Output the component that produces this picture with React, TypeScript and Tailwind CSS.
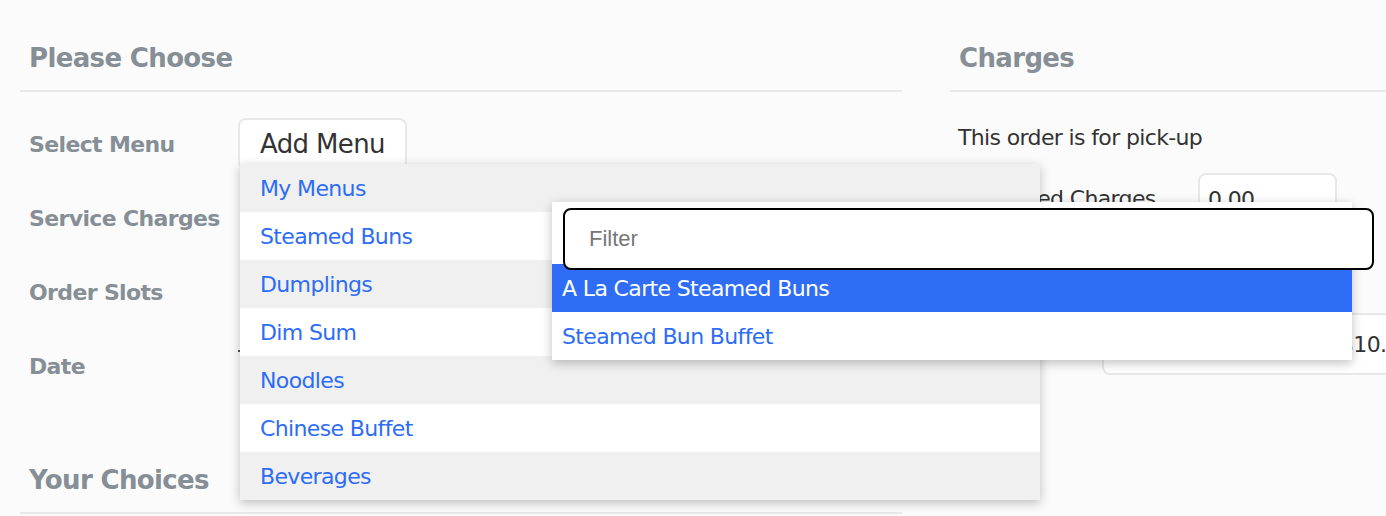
import React from 'react';

const menus = ['My Menus', 'Steamed Buns', 'Dumplings', 'Dim Sum', 'Noodles', 'Chinese Buffet', 'Beverages'];
const subItems = ['A La Carte Steamed Buns', 'Steamed Bun Buffet'];

const font = "font-['DejaVu_Sans',sans-serif] tracking-[-0.04em]";

const Heading = ({ children }: { children: React.ReactNode }) => (
  <h2 className="h-[92px] pl-[9px] pt-[40px] border-b-2 border-[#e8e8e8] text-[26px] leading-[36px] font-bold text-[#868e96]">
    {children}
  </h2>
);

const Row = ({ label, children }: { label: string; children?: React.ReactNode }) => (
  <div className="h-[74px] flex items-center">
    <div className="w-[218px] pl-[9px] text-[22px] font-bold text-[#868e96]">{label}</div>
    <div className="relative flex-1 h-full flex items-center">{children}</div>
  </div>
);

const App = () => {
  return (
    <div className={`w-[1386px] h-[516px] overflow-hidden bg-[#fbfbfb] ${font}`}>
      <div className="flex gap-[48px] pl-[20px]">
        {/* left column */}
        <div className="w-[882px] shrink-0">
          <Heading>Please Choose</Heading>
          <div className="pt-[15px]">
            <Row label="Select Menu">
              <div className="relative">
                <button className="h-[52px] px-[20px] bg-white border-2 border-[#e8e8e8] rounded-[8px] text-[26px] text-[#333]">
                  Add Menu
                </button>
                {/* menu dropdown */}
                <div className="absolute left-[2px] top-[46px] w-[800px] z-10 bg-white shadow-[0_3px_10px_rgba(0,0,0,0.25)]">
                  {menus.map((m, i) => (
                    <div
                      key={m}
                      className={`relative h-[48px] flex items-center pl-[20px] text-[22px] text-[#2d6cf6] ${i % 2 === 0 ? 'bg-[#f0f0f0]' : 'bg-white'}`}
                    >
                      {m}
                      {i === 1 && (
                        <div className="absolute left-[312px] top-[-10px] w-[800px] pt-[62px] bg-white z-20 shadow-[0_3px_10px_rgba(0,0,0,0.25)]">
                          <input
                            placeholder="Filter"
                            className="absolute left-[11px] top-[6px] w-[811px] h-[62px] z-30 bg-white border-2 border-black rounded-[8px] pl-[24px] text-[22px] text-[#333] placeholder:text-[#777] font-['Liberation_Sans',sans-serif] tracking-normal outline-none"
                          />
                          {subItems.map((s, j) => (
                            <div
                              key={s}
                              className={`h-[48px] flex items-center pl-[10px] text-[22px] ${j === 0 ? 'bg-[#2f6df6] text-white' : 'bg-white text-[#2d6cf6]'}`}
                            >
                              {s}
                            </div>
                          ))}
                        </div>
                      )}
                    </div>
                  ))}
                </div>
              </div>
            </Row>
            <Row label="Service Charges" />
            <Row label="Order Slots" />
            <Row label="Date">
              <div className="w-[2px] h-[2px] bg-[#555] mt-[-30px]" />
            </Row>
          </div>
          <div className="mt-[19px]">
            <Heading>Your Choices</Heading>
          </div>
        </div>

        {/* right column */}
        <div className="w-[500px] shrink-0">
          <Heading>Charges</Heading>
          <div className="pl-[8px] pt-[31px] text-[22px] text-[#333]">
            <p className="h-[30px] leading-[30px]">This order is for pick-up</p>
            <div className="mt-[20px] flex items-center">
              <span className="w-[240px]">Estimated Charges</span>
              <div className="w-[139px] h-[50px] bg-white border-2 border-[#e8e8e8] rounded-[8px] pl-[8px] pt-[10px] leading-[30px]">
                0.00
              </div>
            </div>
            <div className="mt-[90px] ml-[144px] h-[62px] bg-white border-2 border-[#e8e8e8] rounded-[8px] flex items-center pl-[236px] whitespace-nowrap">
              $10.00
            </div>
          </div>
        </div>
      </div>
    </div>
  );
};

export default App;
